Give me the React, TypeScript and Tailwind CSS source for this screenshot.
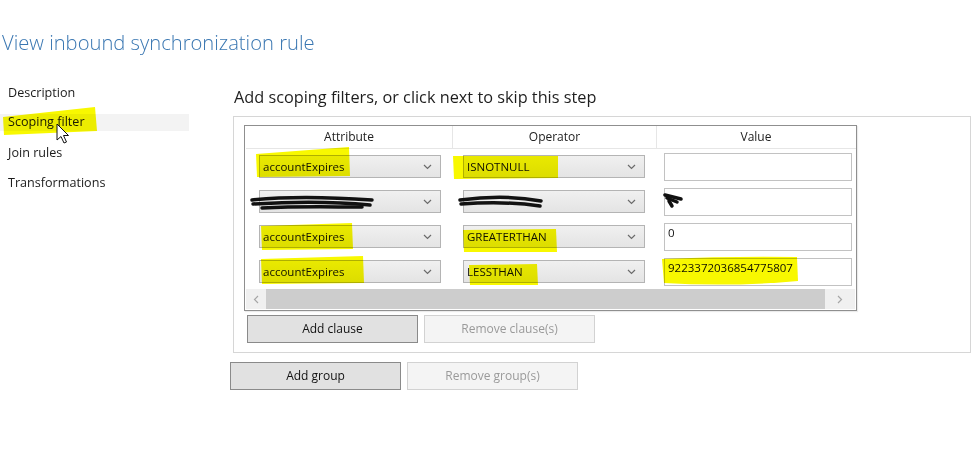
import React from "react";

const FONT = { fontFamily: '"Open Sans", "Noto Sans", "Liberation Sans", sans-serif' };

function Chevron() {
  return (
    <svg width="9" height="6" viewBox="0 0 9 6" className="shrink-0">
      <polyline points="1,1 4.5,4.5 8,1" fill="none" stroke="#6b6b6b" strokeWidth="1.2" />
    </svg>
  );
}

function Combo({ text }: { text: string }) {
  return (
    <div className="w-[182px] h-[23px] border border-[#b4b4b4] bg-gradient-to-b from-[#f0f0f0] to-[#e4e4e4] flex items-center justify-between pl-[3px] pr-[8px] text-[11.5px] text-[#111]">
      <span className="leading-none">{text}</span>
      <Chevron />
    </div>
  );
}

function ValueBox({ text }: { text: string }) {
  return (
    <div className="w-[188px] h-[28px] border border-[#c2c2c2] bg-white pl-[3px] pt-[2px] text-[11.5px] leading-[14px] text-[#111]">
      {text}
    </div>
  );
}

const rows = [
  { attr: "accountExpires", op: "ISNOTNULL", val: "" },
  { attr: "", op: "", val: "" },
  { attr: "accountExpires", op: "GREATERTHAN", val: "0" },
  { attr: "accountExpires", op: "LESSTHAN", val: "9223372036854775807" },
];

export default function App() {
  return (
    <div className="relative w-[971px] h-[475px] bg-white overflow-hidden" style={FONT}>
      <h1 className="pl-[2px] pt-[28px] h-[56px] text-[20.2px] leading-[28px] font-light text-[#3a77b2]">
        View inbound synchronization rule
      </h1>
      <div className="flex mt-[22px]">
        <nav className="w-[189px] flex flex-col text-[12.6px] text-[#1b1b1b]">
          <div className="h-[30px] flex items-center pl-[8px]">Description</div>
          <div className="h-[30px] flex items-center">
            <div className="w-full h-[17px] bg-[#f3f3f3] flex items-center pl-[8px] mt-[-1px]">Scoping filter</div>
          </div>
          <div className="h-[30px] flex items-center pl-[8px]">Join rules</div>
          <div className="h-[30px] flex items-center pl-[8px]">Transformations</div>
        </nav>
        <div className="ml-[41px] w-[741px] flex flex-col">
          <div className="mt-[8px] h-[22px] pl-[4px] flex items-center text-[16.3px] text-[#1e1e1e]">
            Add scoping filters, or click next to skip this step
          </div>
          <div className="mt-[8px] ml-[3px] w-[738px] h-[237px] border border-[#d6d6d6] pl-[10px] pt-[8px]">
            <div className="w-[613px] h-[186px] border border-[#8f8f8f] pl-[1px] flex flex-col shadow-[1px_1px_1px_rgba(0,0,0,0.08)]">
              <div className="h-[23px] flex border-b border-[#e6e6e6] text-[12px] text-[#222]">
                <div className="w-[207px] flex items-center justify-center border-r border-[#e6e6e6]">Attribute</div>
                <div className="w-[204px] flex items-center justify-center border-r border-[#e6e6e6]">Operator</div>
                <div className="w-[198px] flex items-center justify-center">Value</div>
              </div>
              {rows.map((r, i) => (
                <div key={i} className="h-[35px] flex items-center">
                  <div className="w-[207px] pl-[13px] flex items-center">
                    <Combo text={r.attr} />
                  </div>
                  <div className="w-[204px] pl-[10px] flex items-center">
                    <Combo text={r.op} />
                  </div>
                  <div className="w-[198px] pl-[7px] flex items-center">
                    <ValueBox text={r.val} />
                  </div>
                </div>
              ))}
              <div className="h-[20px] flex bg-[#f0f0f0] w-[609px]">
                <div className="w-[20px] flex items-center justify-center">
                  <svg width="6" height="9" viewBox="0 0 6 9">
                    <polyline points="5,1 1.5,4.5 5,8" fill="none" stroke="#a6a6a6" strokeWidth="1.2" />
                  </svg>
                </div>
                <div className="w-[559px] bg-[#cdcdcd]" />
                <div className="flex-1 flex items-center justify-center">
                  <svg width="6" height="9" viewBox="0 0 6 9">
                    <polyline points="1,1 4.5,4.5 1,8" fill="none" stroke="#a6a6a6" strokeWidth="1.2" />
                  </svg>
                </div>
              </div>
            </div>
            <div className="mt-[4px] ml-[3px] flex gap-[6px] text-[12px]">
              <div className="w-[171px] h-[28px] bg-[#e1e1e1] border border-[#8a8a8a] flex items-center justify-center text-[#111]">
                Add clause
              </div>
              <div className="w-[171px] h-[28px] bg-[#f4f4f4] border border-[#d2d2d2] flex items-center justify-center text-[#9a9a9a]">
                Remove clause(s)
              </div>
            </div>
          </div>
          <div className="mt-[9px] flex gap-[6px] text-[12px]">
            <div className="w-[171px] h-[28px] bg-[#e1e1e1] border border-[#8a8a8a] flex items-center justify-center text-[#111]">
              Add group
            </div>
            <div className="w-[171px] h-[28px] bg-[#f4f4f4] border border-[#d2d2d2] flex items-center justify-center text-[#9a9a9a]">
              Remove group(s)
            </div>
          </div>
        </div>
      </div>

      {/* highlighter annotations */}
      <svg className="absolute inset-0 pointer-events-none mix-blend-multiply" width="971" height="475">
        <g fill="#f8f800">
          <path d="M3,117 L95,107 L97,131 L4,135 Z" />
          <path d="M256,154 L349,147 L350,176 L257,177 Z" />
          <path d="M453,156 L558,156 L558,178 L454,179 Z" />
          <path d="M261,226 L352,223 L353,249 L262,250 Z" />
          <path d="M463,230 L556,229 L557,252 L464,252 Z" />
          <path d="M261,259 L363,256 L364,283 L262,284 Z" />
          <path d="M469,265 L537,264 L538,285 L470,285 Z" />
          <path d="M662,259 Q730,256 797,257 L798,281 Q730,287 664,283 Z" />
        </g>
      </svg>

      {/* marker redactions and cursor */}
      <svg className="absolute inset-0 pointer-events-none" width="971" height="475">
        <g fill="none" stroke="#111" strokeLinecap="round" strokeWidth="3.5">
          <path d="M252,200 C290,196 330,197 372,200" />
          <path d="M253,204 C300,201 340,202 370,205" />
          <path d="M262,208 C300,206 330,207 362,207" />
          <path d="M460,200 C490,196 520,197 541,201" />
          <path d="M461,204 C490,202 520,203 540,206" />
          <path d="M665,195 L681,199" />
          <path d="M667,198 L677,202" />
          <path d="M669,201 L672,206" />
        </g>
        <path
          d="M57,124 L57,140 L61,136.5 L64,143 L66.5,142 L63.5,135.5 L68.5,135.5 Z"
          fill="#fff"
          stroke="#111"
          strokeWidth="1"
          strokeLinejoin="round"
        />
      </svg>
    </div>
  );
}
